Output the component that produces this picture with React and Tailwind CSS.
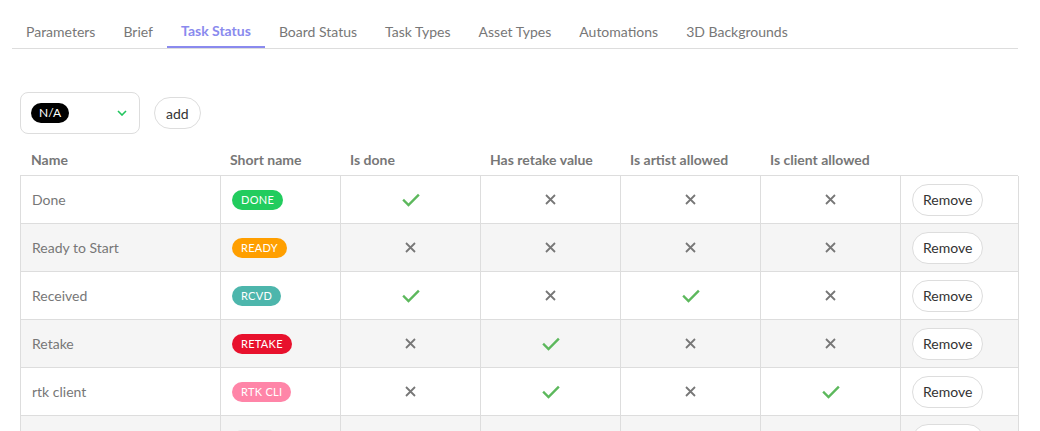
import React from 'react';

const tabs = ['Parameters', 'Brief', 'Task Status', 'Board Status', 'Task Types', 'Asset Types', 'Automations', '3D Backgrounds'];

const statuses = [
  { name: 'Done', short: 'DONE', color: 'bg-[#22cc5e]', done: true, retake: false, artist: false, client: false },
  { name: 'Ready to Start', short: 'READY', color: 'bg-[#ff9f00]', done: false, retake: false, artist: false, client: false },
  { name: 'Received', short: 'RCVD', color: 'bg-[#4db6ac]', done: true, retake: false, artist: true, client: false },
  { name: 'Retake', short: 'RETAKE', color: 'bg-[#e8112d]', done: false, retake: true, artist: false, client: false },
  { name: 'rtk client', short: 'RTK CLI', color: 'bg-[#ff85a8]', done: false, retake: true, artist: false, client: true },
  { name: '', short: '', color: 'bg-[#e6e6e6] w-[46px]', done: false, retake: false, artist: false, client: false, last: true },
];

const Check = () => (
  <svg width="18" height="14" viewBox="0 0 18 14" fill="none">
    <path d="M2 7.5l4.5 4.5L16 2.5" stroke="#5cb85c" strokeWidth="2.4" strokeLinecap="square" />
  </svg>
);

const Cross = () => (
  <svg width="11" height="11" viewBox="0 0 11 11" fill="none">
    <path d="M1 1l9 9M10 1l-9 9" stroke="#777" strokeWidth="1.8" />
  </svg>
);

const Flag = ({ value, last }) => (
  <div className="flex items-center justify-center border-r border-b border-[#dddddd]">
    {last ? null : value ? <Check /> : <Cross />}
  </div>
);

const cols = 'grid grid-cols-[200px_120px_140px_140px_140px_140px_118px]';

export default function App() {
  return (
    <div className="w-[1040px] h-[431px] overflow-hidden bg-white px-3 pt-[14px] font-['Lato',sans-serif] text-[14px]">
      {/* Tabs */}
      <div className="flex border-b border-[#dddddd] w-[1006px]">
        {tabs.map((t) => (
          <div
            key={t}
            className={
              t === 'Task Status'
                ? 'h-[34px] px-[14px] flex items-center font-bold text-[#8a8aee] border-b-2 border-[#8a8aee] -mb-px'
                : 'h-[34px] px-[14px] flex items-center text-[#777777]'
            }
          >
            {t}
          </div>
        ))}
      </div>

      <div className="pl-2">
        {/* Add status */}
        <div className="flex items-center gap-[14px] mt-[43px]">
          <div className="w-[120px] h-[42px] rounded-lg border border-[#dddddd] flex items-center justify-between pl-[10px] pr-[12px]">
            <span className="h-5 px-[8px] rounded-full bg-black text-white text-[12px] leading-5">N/A</span>
            <svg width="10" height="6" viewBox="0 0 10 6" fill="none">
              <path d="M1 1l4 4 4-4" stroke="#22c55e" strokeWidth="1.6" />
            </svg>
          </div>
          <button className="h-8 px-[11px] rounded-full border border-[#dddddd] text-[#333333]">add</button>
        </div>

        {/* Table header */}
        <div className={`${cols} mt-[9px] h-8 items-center font-bold text-[#777777]`}>
          <div className="pl-[11px]">Name</div>
          <div className="pl-[10px]">Short name</div>
          <div className="pl-[10px]">Is done</div>
          <div className="pl-[10px]">Has retake value</div>
          <div className="pl-[10px]">Is artist allowed</div>
          <div className="pl-[10px]">Is client allowed</div>
          <div />
        </div>

        {/* Rows */}
        <div className="border-t border-l border-[#dddddd] w-[998px]">
          {statuses.map((s, i) => (
            <div key={i} className={`${cols} h-12 ${i % 2 === 1 ? 'bg-[#f5f5f5]' : 'bg-white'}`}>
              <div className="flex items-center pl-[11px] text-[#777777] border-r border-b border-[#dddddd]">{s.name}</div>
              <div className="flex items-center pl-[11px] border-r border-b border-[#dddddd]">
                <span className={`h-5 px-[9px] rounded-full ${s.color} text-white text-[11px] leading-5 tracking-[0.3px]`}>
                  {s.short}
                </span>
              </div>
              <Flag value={s.done} last={s.last} />
              <Flag value={s.retake} last={s.last} />
              <Flag value={s.artist} last={s.last} />
              <Flag value={s.client} last={s.last} />
              <div className="flex items-center pl-[11px] border-r border-b border-[#dddddd]">
                {s.last ? (
                  <span className="h-8 w-[72px] rounded-full border border-[#dddddd] bg-white" />
                ) : (
                  <button className="h-8 px-[10px] rounded-full border border-[#dddddd] bg-white text-[#333333]">Remove</button>
                )}
              </div>
            </div>
          ))}
        </div>
      </div>
    </div>
  );
}
